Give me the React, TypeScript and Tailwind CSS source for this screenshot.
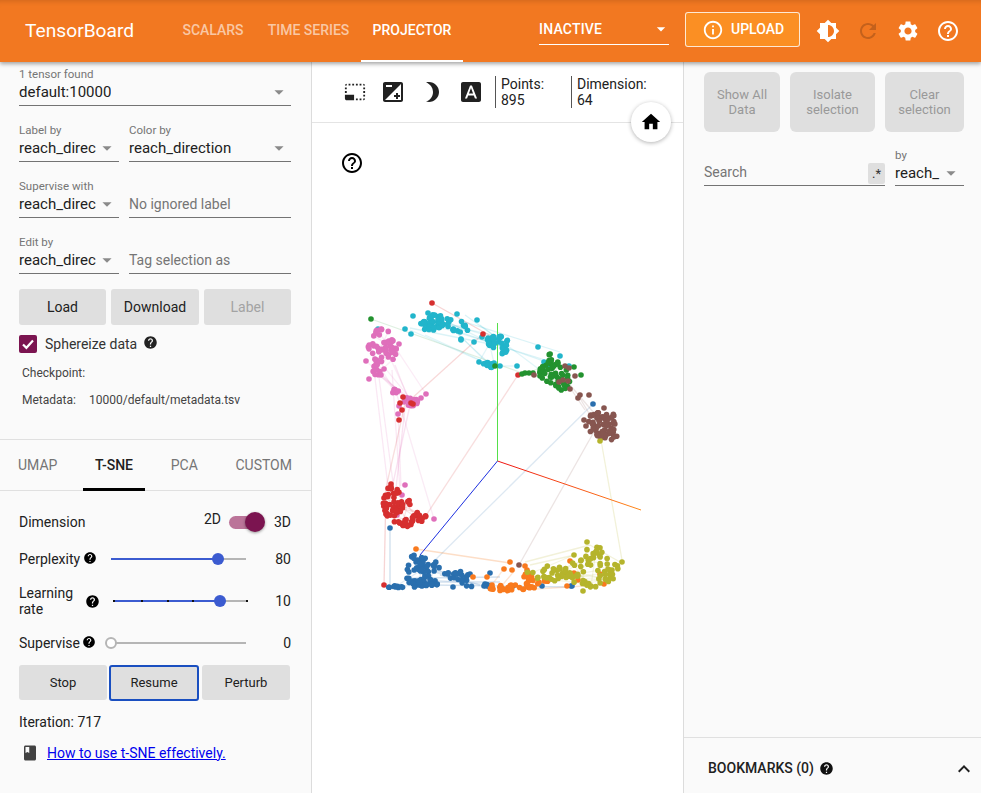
import React from "react";

const P = {
  brightness: "M20 15.31L23.31 12 20 8.69V4h-4.69L12 .69 8.69 4H4v4.69L.69 12 4 15.31V20h4.69L12 23.31 15.31 20H20v-4.69zM12 18V6c3.31 0 6 2.69 6 6s-2.69 6-6 6z",
  refresh: "M17.65 6.35C16.2 4.9 14.21 4 12 4c-4.42 0-7.99 3.58-7.99 8s3.57 8 7.99 8c3.73 0 6.84-2.55 7.73-6h-2.08c-.82 2.33-3.04 4-5.65 4-3.31 0-6-2.69-6-6s2.69-6 6-6c1.66 0 3.14.69 4.22 1.78L13 11h7V4l-2.35 2.35z",
  settings: "M19.14 12.94c.04-.3.06-.61.06-.94 0-.32-.02-.64-.07-.94l2.03-1.58c.18-.14.23-.41.12-.61l-1.92-3.32c-.12-.22-.37-.29-.59-.22l-2.39.96c-.5-.38-1.03-.7-1.62-.94l-.36-2.54c-.04-.24-.24-.41-.48-.41h-3.84c-.24 0-.43.17-.47.41l-.36 2.54c-.59.24-1.13.57-1.62.94l-2.39-.96c-.22-.08-.47 0-.59.22L2.74 8.87c-.12.21-.08.47.12.61l2.03 1.58c-.05.3-.09.63-.09.94s.02.64.07.94l-2.03 1.58c-.18.14-.23.41-.12.61l1.92 3.32c.12.22.37.29.59.22l2.39-.96c.5.38 1.03.7 1.62.94l.36 2.54c.05.24.24.41.48.41h3.84c.24 0 .44-.17.47-.41l.36-2.54c.59-.24 1.13-.56 1.62-.94l2.39.96c.22.08.47 0 .59-.22l1.92-3.32c.12-.22.07-.47-.12-.61l-2.01-1.58zM12 15.6c-1.98 0-3.6-1.62-3.6-3.6s1.62-3.6 3.6-3.6 3.6 1.62 3.6 3.6-1.62 3.6-3.6 3.6z",
  helpOutline: "M11 18h2v-2h-2v2zm1-16C6.48 2 2 6.48 2 12s4.48 10 10 10 10-4.48 10-10S17.52 2 12 2zm0 18c-4.41 0-8-3.59-8-8s3.59-8 8-8 8 3.59 8 8-3.59 8-8 8zm0-14c-2.21 0-4 1.79-4 4h2c0-1.1.9-2 2-2s2 .9 2 2c0 2-3 1.75-3 5h2c0-2.25 3-2.5 3-5 0-2.21-1.79-4-4-4z",
  help: "M12 2C6.48 2 2 6.48 2 12s4.48 10 10 10 10-4.48 10-10S17.52 2 12 2zm1 17h-2v-2h2v2zm2.07-7.75l-.9.92C13.45 12.9 13 13.5 13 15h-2v-.5c0-1.1.45-2.1 1.17-2.83l1.24-1.26c.37-.36.59-.86.59-1.41 0-1.1-.9-2-2-2s-2 .9-2 2H8c0-2.21 1.79-4 4-4s4 1.79 4 4c0 .88-.36 1.68-.93 2.25z",
  info: "M11 7h2v2h-2zm0 4h2v6h-2zm1-9C6.48 2 2 6.48 2 12s4.48 10 10 10 10-4.48 10-10S17.52 2 12 2zm0 18c-4.41 0-8-3.59-8-8s3.59-8 8-8 8 3.59 8 8-3.59 8-8 8z",
  home: "M10 20v-6h4v6h5v-8h3L12 3 2 12h3v8z",
  select: "M23 15h-2v2h2v-2zm0-4h-2v2h2v-2zm0 8h-2v2c1 0 2-1 2-2zM15 3h-2v2h2V3zm8 4h-2v2h2V7zm-2-4v2h2c0-1-1-2-2-2zM3 21h8v-6H1v4c0 1.1.9 2 2 2zM3 7H1v2h2V7zm12 12h-2v2h2v-2zm4-16h-2v2h2V3zm0 16h-2v2h2v-2zM3 3C2 3 1 4 1 5h2V3zm0 8H1v2h2v-2zm8-8H9v2h2V3zM7 3H5v2h2V3z",
  exposure: "M15 17v2h2v-2h2v-2h-2v-2h-2v2h-2v2h2zm5-15H4c-1.1 0-2 .9-2 2v16c0 1.1.9 2 2 2h16c1.1 0 2-.9 2-2V4c0-1.1-.9-2-2-2zM5 5h6v2H5V5zm15 15H4L20 4v16z",
  moon: "M9 2c-1.05 0-2.05.16-3 .46 4.06 1.27 7 5.06 7 9.54 0 4.48-2.94 8.27-7 9.54.95.3 1.95.46 3 .46 5.52 0 10-4.48 10-10S14.52 2 9 2z",
  font: "M9.93 13.5h4.14L12 7.98zM20 2H4c-1.1 0-2 .9-2 2v16c0 1.1.9 2 2 2h16c1.1 0 2-.9 2-2V4c0-1.1-.9-2-2-2zm-4.05 16.5l-1.14-3H9.17l-1.12 3H5.96l5.11-13h1.86l5.11 13h-2.09z",
  book: "M18 2H6c-1.1 0-2 .9-2 2v16c0 1.1.9 2 2 2h12c1.1 0 2-.9 2-2V4c0-1.1-.9-2-2-2zM6 4h5v8l-2.5-1.5L6 12V4z",
  up: "M7.41 15.41L12 10.83l4.59 4.58L18 14l-6-6-6 6z",
  caret: "M7 10l5 5 5-5z",
};

function Icon({ d, size = 24, className = "" }: { d: string; size?: number; className?: string }) {
  return (
    <svg width={size} height={size} viewBox="0 0 24 24" fill="currentColor" className={"shrink-0 " + className}>
      <path d={d} />
    </svg>
  );
}

function SelectBox({ label, value, className = "" }: { label: string; value: string; className?: string }) {
  return (
    <div className={className}>
      <div className="h-[14px] text-[11.5px] leading-[14px] text-[#757575]">{label}</div>
      <div className="h-[25px] flex items-center justify-between border-b border-[#737373] pr-[1px] pb-[2px]">
        <span className="text-[15px] text-[#212121] whitespace-nowrap overflow-hidden">{value}</span>
        <Icon d={P.caret} size={22} className="text-[#8a8a8a]" />
      </div>
    </div>
  );
}

function InputBox({ text, className = "" }: { text: string; className?: string }) {
  return (
    <div className={className}>
      <div className="h-[14px]" />
      <div className="h-[25px] flex items-center border-b border-[#737373] pb-[2px] text-[14px] text-[#757575] whitespace-nowrap">{text}</div>
    </div>
  );
}

function Btn({ children, className = "" }: { children: React.ReactNode; className?: string }) {
  return <div className={"flex items-center justify-center rounded-[3px] bg-[#dfdfdf] " + className}>{children}</div>;
}

function Slider({ pct, ticks, open, className = "" }: { pct: number; ticks?: number[]; open?: boolean; className?: string }) {
  return (
    <div className={"relative h-[2px] bg-[#b5b5b5] " + className}>
      {!open && <div className="absolute left-0 top-0 h-[2px] bg-[#3b5bd0]" style={{ width: pct + "%" }} />}
      {ticks?.map((t) => (
        <div key={t} className="absolute top-0 w-[2px] h-[2px] bg-[#111]" style={{ left: t + "%" }} />
      ))}
      {open ? (
        <div className="absolute left-[-6px] top-[-5px] w-[12px] h-[12px] rounded-full border-2 border-[#b5b5b5] bg-white" />
      ) : (
        <div className="absolute top-[-5px] ml-[-6px] w-[12px] h-[12px] rounded-full bg-[#3b5bd0]" style={{ left: pct + "%" }} />
      )}
    </div>
  );
}

// ---------- scatter drawing ----------
function rng(seed: number) {
  return () => {
    seed |= 0;
    seed = (seed + 0x6d2b79f5) | 0;
    let t = Math.imul(seed ^ (seed >>> 15), 1 | seed);
    t = (t + Math.imul(t ^ (t >>> 7), 61 | t)) ^ t;
    return ((t ^ (t >>> 14)) >>> 0) / 4294967296;
  };
}
type Pt = [number, number];
const C = {
  teal: "#22b5cb",
  pink: "#df6fbb",
  red: "#d62f2f",
  blue: "#2a6fae",
  orange: "#f97a1e",
  olive: "#b5b42c",
  green: "#23922f",
  brown: "#875650",
};
const r = rng(717);
function blob(cx: number, cy: number, rx: number, ry: number, n: number): Pt[] {
  const out: Pt[] = [];
  for (let i = 0; i < n; i++) {
    const a = r() * Math.PI * 2;
    const d = Math.sqrt(r());
    out.push([cx + Math.cos(a) * d * rx, cy + Math.sin(a) * d * ry]);
  }
  return out;
}
const clusters: { c: string; pts: Pt[]; edges?: number }[] = [
  { c: C.teal, edges: 24, pts: [
    ...blob(431, 325, 12, 7, 30), ...blob(447, 323, 9, 6, 12), ...blob(460, 327, 9, 6, 10), ...blob(436, 317, 7, 3, 7),
    ...blob(497, 342, 11, 7, 28), ...blob(489, 365, 8, 3, 12), ...blob(504, 352, 4, 3, 4),
    [413, 316], [428, 313], [457, 314], [461, 339], [477, 320], [494, 363], [500, 366], [482, 337], [378, 329], [405, 329], [411, 334], [461, 340], [479, 362], [474, 342],
    [544, 362], [560, 356], [569, 366], [538, 347], [548, 367], [517, 366],
  ] },
  { c: C.pink, edges: 22, pts: [
    ...blob(388, 350, 11, 11, 30), ...blob(378, 347, 11, 13, 12), ...blob(376, 366, 10, 9, 12), ...blob(381, 332, 8, 3, 8),
    ...blob(411, 401, 7, 5, 18), ...blob(396, 391, 4, 4, 7),
    [366, 361], [369, 379], [381, 375], [399, 344], [405, 399], [426, 394], [421, 398], [398, 414], [399, 406], [384, 369],
    [434, 519], [405, 485], [402, 495], [397, 515],
  ] },
  { c: C.red, edges: 12, pts: [
    ...blob(393, 503, 10, 17, 40), ...blob(404, 523, 12, 4, 18), ...blob(418, 517, 8, 5, 14), ...blob(406, 503, 5, 7, 6),
    [391, 484], [391, 487], [384, 498], [386, 509], [432, 303], [483, 334], [400, 403], [402, 410], [399, 420], [411, 403], [413, 404], [384, 585], [518, 375], [403, 397],
  ] },
  { c: C.blue, edges: 14, pts: [
    ...blob(422, 572, 18, 16, 56), ...blob(424, 585, 14, 4, 12), ...blob(413, 557, 3, 2, 3),
    ...blob(454, 577, 16, 7, 18), ...blob(395, 587, 8, 1.5, 10), ...blob(477, 586, 14, 3, 6),
    [490, 573], [485, 584], [513, 586], [542, 586], [571, 586], [390, 528], [593, 404],
    [470, 574], [484, 586], [453, 587], [572, 586],
  ] },
  { c: C.orange, edges: 0, pts: [
    ...blob(513, 588, 24, 3, 30), ...blob(530, 581, 11, 7, 12), ...blob(545, 579, 5, 3, 5), ...blob(528, 575, 4, 3, 4),
    [416, 549], [510, 562], [504, 569], [512, 570], [487, 577], [473, 577], [570, 561], [574, 573], [578, 580], [600, 574], [604, 584], [567, 586], [492, 585], [527, 570], [525, 566],
  ] },
  { c: C.olive, edges: 24, pts: [
    ...blob(592, 571, 27, 16, 50), ...blob(552, 573, 25, 8, 32), ...blob(594, 552, 8, 8, 10),
    [587, 542], [574, 555], [622, 562], [608, 569], [612, 570], [583, 591], [600, 441], [601, 438], [602, 436], [591, 586],
  ] },
  { c: C.green, edges: 10, pts: [
    ...blob(553, 373, 16, 13, 38), ...blob(561, 382, 10, 8, 12), ...blob(550, 358, 4, 6, 6),
    [581, 375], [522, 374], [525, 373], [529, 373], [533, 373], [371, 319], [495, 366], [540, 376], [574, 367],
  ] },
  { c: C.brown, edges: 8, pts: [
    ...blob(603, 424, 16, 14, 52), ...blob(610, 435, 7, 6, 8),
    [569, 368], [565, 366], [563, 380], [568, 381], [559, 382], [575, 376], [570, 389], [580, 395], [578, 398], [589, 395], [604, 408], [584, 420], [586, 426], [519, 565], [534, 375],
  ] },
];

const extraEdges: [number, number, number, number, string, number][] = [
  [432, 303, 498, 340, C.red, 0.2],
  [371, 319, 430, 340, C.green, 0.15],
  [430, 340, 525, 374, C.green, 0.14],
  [410, 400, 483, 334, C.red, 0.18],
  [384, 585, 386, 490, C.red, 0.2],
  [390, 588, 390, 528, C.blue, 0.22],
  [420, 575, 593, 404, C.blue, 0.16],
  [519, 565, 595, 430, C.brown, 0.16],
  [601, 440, 622, 560, C.olive, 0.18],
  [416, 549, 510, 563, C.orange, 0.25],
  [425, 517, 518, 375, C.red, 0.16],
  [434, 519, 397, 395, C.pink, 0.14],
  [378, 370, 394, 490, C.pink, 0.16],
  [375, 378, 388, 487, C.pink, 0.16],
  [392, 370, 400, 490, C.pink, 0.16],
  [405, 408, 396, 488, C.pink, 0.2],
  [410, 405, 392, 488, C.pink, 0.2],
  [405, 404, 386, 488, C.red, 0.16],
  [398, 412, 401, 486, C.pink, 0.16],
  [395, 365, 408, 398, C.pink, 0.16],
  [380, 375, 400, 395, C.pink, 0.16],
  [440, 325, 555, 365, C.teal, 0.16],
  [450, 330, 545, 360, C.teal, 0.16],
  [465, 322, 560, 352, C.teal, 0.16],
  [480, 325, 540, 370, C.teal, 0.14],
  [465, 315, 500, 340, C.teal, 0.16],
  [410, 330, 490, 365, C.teal, 0.14],
  [425, 335, 480, 360, C.teal, 0.14],
  [410, 328, 495, 345, C.teal, 0.16],
  [530, 373, 560, 385, C.green, 0.16],
  [570, 385, 600, 420, C.brown, 0.16],
  [578, 395, 590, 415, C.brown, 0.16],
  [565, 380, 585, 410, C.brown, 0.16],
  [420, 578, 500, 577, C.blue, 0.2],
  [420, 582, 500, 582, C.blue, 0.2],
  [430, 585, 570, 587, C.blue, 0.2],
  [440, 575, 480, 585, C.blue, 0.2],
  [515, 570, 500, 588, C.orange, 0.2],
  [503, 570, 488, 590, C.orange, 0.16],
  [525, 562, 590, 545, C.olive, 0.18],
  [530, 565, 575, 555, C.olive, 0.18],
  [590, 545, 620, 562, C.olive, 0.18],
  [520, 590, 600, 585, C.orange, 0.2],
];

function Scatter() {
  return (
    <svg width={371} height={670} viewBox="312 123 371 670" className="absolute left-0 top-0 pointer-events-none">
      <defs>
        <linearGradient id="xaxis" gradientUnits="userSpaceOnUse" x1="497" y1="461" x2="641" y2="510">
          <stop offset="0" stopColor="#ee1111" />
          <stop offset="1" stopColor="#ff8a1a" />
        </linearGradient>
      </defs>
      {extraEdges.map((e, i) => (
        <line key={i} x1={e[0]} y1={e[1]} x2={e[2]} y2={e[3]} stroke={e[4]} strokeOpacity={e[5]} strokeWidth={1.3} />
      ))}
      {clusters.map((cl, ci) =>
        Array.from({ length: cl.edges ?? 0 }).map((_, i) => {
          const a = cl.pts[(i * 7 + 3) % cl.pts.length];
          const b = cl.pts[(i * 13 + 11) % cl.pts.length];
          if (Math.hypot(a[0] - b[0], a[1] - b[1]) > 60) return null;
          return <line key={ci + "-" + i} x1={a[0]} y1={a[1]} x2={b[0]} y2={b[1]} stroke={cl.c} strokeOpacity={0.13} strokeWidth={1.3} />;
        })
      )}
      <line x1={497.5} y1={461} x2={497.5} y2={323} stroke="#55e04a" />
      <line x1={497.5} y1={461} x2={641} y2={510} stroke="url(#xaxis)" />
      <line x1={497.5} y1={461} x2={420} y2={555} stroke="#1c2fe0" />
      {clusters.map((cl, ci) =>
        cl.pts.map((p, i) => <circle key={ci + "_" + i} cx={p[0]} cy={p[1]} r={2.8} fill={cl.c} />)
      )}
    </svg>
  );
}

export default function App() {
  return (
    <div className="w-[981px] h-[793px] flex flex-col overflow-hidden bg-white text-[#212121] font-['Roboto',sans-serif]">
      {/* top bar */}
      <header className="relative z-10 h-[62px] shrink-0 flex items-center bg-[#f27821] text-white shadow-[0_2px_4px_rgba(0,0,0,0.35),inset_0_6px_6px_-6px_rgba(0,0,0,0.2)]">
        <div className="ml-[25px] w-[145px] text-[19.2px]">TensorBoard</div>
        <nav className="flex h-full text-[14px] font-medium">
          <div className="w-[86px] flex items-center justify-center text-white/60 pb-[2px]">SCALARS</div>
          <div className="w-[105px] flex items-center justify-center text-white/60 pb-[2px]">TIME SERIES</div>
          <div className="w-[102px] flex items-center justify-center border-b-2 border-white">PROJECTOR</div>
        </nav>
        <div className="ml-[76px] w-[130px] h-[33px] flex items-center justify-between border-b border-white text-[14px] font-medium tracking-[0.2px] mt-[-5px] pt-[2px]">
          <span>INACTIVE</span>
          <Icon d={P.caret} size={20} className="mr-[-2px]" />
        </div>
        <div className="ml-[16px] w-[115px] h-[35px] flex items-center rounded-[3px] border border-white/80 bg-[#fb8f23] pl-[16px] gap-[7px] text-[14px] font-medium mt-[-3px]">
          <Icon d={P.info} size={22} />
          <span>UPLOAD</span>
        </div>
        <div className="ml-[16px] flex items-center gap-[16px]">
          <Icon d={P.brightness} />
          <Icon d={P.refresh} className="text-[#c4611c]" />
          <Icon d={P.settings} />
          <Icon d={P.helpOutline} />
        </div>
      </header>

      <main className="flex flex-1 min-h-0">
        {/* left panel */}
        <aside className="w-[312px] shrink-0 bg-[#fafafa] border-r border-[#dcdcdc] flex flex-col">
          <div className="px-[19px] pr-[20px] pt-[5px]">
            <SelectBox label="1 tensor found" value="default:10000" />
            <div className="flex gap-[10px] mt-[17px]">
              <SelectBox label="Label by" value="reach_direc" className="w-[100px]" />
              <SelectBox label="Color by" value="reach_direction" className="flex-1" />
            </div>
            <div className="flex gap-[10px] mt-[17px]">
              <SelectBox label="Supervise with" value="reach_direc" className="w-[100px]" />
              <InputBox text="No ignored label" className="flex-1" />
            </div>
            <div className="flex gap-[10px] mt-[17px]">
              <SelectBox label="Edit by" value="reach_direc" className="w-[100px]" />
              <InputBox text="Tag selection as" className="flex-1" />
            </div>
            <div className="flex gap-[5px] mt-[15px] text-[14px]">
              <Btn className="w-[87px] h-[36px]">Load</Btn>
              <Btn className="w-[88px] h-[36px]">Download</Btn>
              <Btn className="w-[87px] h-[36px] text-[#a3a3a3]">Label</Btn>
            </div>
            <div className="flex items-center mt-[10px] h-[18px]">
              <div className="w-[18px] h-[18px] rounded-[2px] bg-[#7b1450] flex items-center justify-center">
                <svg width={14} height={14} viewBox="0 0 14 14" fill="none" stroke="#fff" strokeWidth={2.2}>
                  <path d="M2 7.5l3.4 3.3L12 3.6" />
                </svg>
              </div>
              <span className="ml-[8px] text-[14px] text-[#333]">Sphereize data</span>
              <Icon d={P.help} size={15} className="ml-[6px] mt-[-3px] text-[#222]" />
            </div>
            <div className="mt-[12px] ml-[3px] text-[12px] leading-[16px] text-[#444]">Checkpoint:</div>
            <div className="mt-[11px] ml-[3px] text-[12px] leading-[16px] text-[#444] flex">
              <span className="w-[67px]">Metadata:</span>
              <span>10000/default/metadata.tsv</span>
            </div>
          </div>

          <div className="mt-[31px] border-t border-[#e0e0e0] h-[52px] border-b flex items-stretch text-[14px] text-[#757575] pl-[18px] pr-[19px] justify-between">
            <div className="flex items-center">UMAP</div>
            <div className="relative flex items-center font-medium text-[#212121]">
              T-SNE
              <div className="absolute left-[-12px] right-[-12px] bottom-[-1px] h-[3px] bg-black" />
            </div>
            <div className="flex items-center">PCA</div>
            <div className="flex items-center">CUSTOM</div>
          </div>

          <div className="px-[19px] pr-[20px] text-[14px] text-[#212121]">
            <div className="h-[30px] mt-[16px] flex items-center justify-between">
              <span>Dimension</span>
              <div className="flex items-center">
                <span className="mt-[-5px]">2D</span>
                <div className="relative ml-[8px] w-[33px] h-[13px] rounded-full bg-[#bb7499]">
                  <div className="absolute right-[-3px] top-[-4px] w-[20px] h-[20px] rounded-full bg-[#7b1450] shadow-[0_1px_3px_rgba(0,0,0,0.4)]" />
                </div>
                <span className="ml-[12px]">3D</span>
              </div>
            </div>
            <div className="h-[24px] mt-[10px] flex items-center">
              <span>Perplexity</span>
              <Icon d={P.help} size={14} className="ml-[3px] mt-[-3px] text-black" />
              <Slider pct={79} className="ml-[14px] w-[135px]" />
              <span className="ml-auto">80</span>
            </div>
            <div className="h-[32px] mt-[14px] flex items-center">
              <span className="w-[66px] leading-[16px]">Learning rate</span>
              <Icon d={P.help} size={15} className="ml-[0px] text-black" />
              <Slider pct={80} ticks={[0, 21, 40, 59, 99]} className="ml-[13px] w-[134px]" />
              <span className="ml-auto">10</span>
            </div>
            <div className="h-[24px] mt-[14px] flex items-center">
              <span>Supervise</span>
              <Icon d={P.help} size={14} className="ml-[2px] mt-[-3px] text-black" />
              <Slider pct={0} open className="ml-[15px] w-[135px]" />
              <span className="ml-auto">0</span>
            </div>
            <div className="flex mt-[10px] text-[13px]">
              <Btn className="w-[88px] h-[35px]">Stop</Btn>
              <Btn className="ml-[2px] w-[90px] h-[36px] border-2 border-[#1a4fc0]">Resume</Btn>
              <Btn className="ml-[3px] w-[88px] h-[35px]">Perturb</Btn>
            </div>
            <div className="mt-[13px] leading-[16px]">Iteration: 717</div>
            <div className="mt-[15px] h-[16px] flex items-center">
              <Icon d={P.book} size={18} className="ml-[2px] text-[#424242]" />
              <a href="#" className="ml-[8px] text-[#0000ee] underline whitespace-nowrap">How to use t-SNE effectively.</a>
            </div>
          </div>
        </aside>

        {/* center */}
        <section className="w-[371px] shrink-0 flex flex-col bg-white">
          <div className="relative h-[61px] shrink-0 border-b border-[#e4e4e4] flex items-center pl-[32px] text-[14px] leading-[16px] text-[#212121]">
            <div className="flex items-center gap-[15px] mt-[-1px]">
              <Icon d={P.select} size={22} />
              <Icon d={P.exposure} />
              <Icon d={P.moon} />
              <Icon d={P.font} />
            </div>
            <div className="ml-[12px] h-[32px] border-l border-[#555] pl-[5px] w-[76px] mt-[-1px]">Points:<br />895</div>
            <div className="h-[32px] border-l border-[#555] pl-[5px] mt-[-1px]">Dimension:<br />64</div>
            <div className="absolute z-[5] right-[12px] top-[40px] w-[40px] h-[40px] rounded-full bg-white shadow-[0_1px_4px_rgba(0,0,0,0.3)] flex items-center justify-center">
              <Icon d={P.home} size={22} className="text-black" />
            </div>
          </div>
          <div className="relative flex-1">
            <Scatter />
            <Icon d={P.helpOutline} className="absolute left-[28px] top-[28px] text-black" />
          </div>
        </section>

        {/* right */}
        <aside className="w-[298px] shrink-0 bg-[#fafafa] border-l border-[#dcdcdc] flex flex-col">
          <div className="pl-[20px] pr-[17px] pt-[10px] flex-1">
            <div className="flex gap-[10px] text-[13px] leading-[15px] text-[#999] text-center">
              <div className="w-[76px] h-[60px] rounded-[6px] bg-[#dfdfdf] flex items-center justify-center">Show All<br />Data</div>
              <div className="w-[85px] h-[60px] rounded-[6px] bg-[#dfdfdf] flex items-center justify-center">Isolate<br />selection</div>
              <div className="w-[79px] h-[60px] rounded-[6px] bg-[#dfdfdf] flex items-center justify-center">Clear<br />selection</div>
            </div>
            <div className="flex gap-[10px] mt-[16px]">
              <div className="w-[181px] h-[38px] border-b border-[#737373] flex items-end justify-between">
                <span className="text-[14px] text-[#757575] leading-[26px]">Search</span>
                <span className="w-[17px] h-[21px] mb-[1px] rounded-[2px] bg-[#dfdfdf] text-[13px] leading-[21px] text-center text-[#333]">.*</span>
              </div>
              <div className="w-[69px] relative h-[38px]">
                <div className="h-[14px] text-[11.5px] leading-[14px] text-[#757575]">by</div>
                <div className="h-[24px] border-b border-[#737373] flex items-center justify-between pb-[1px]">
                  <span className="text-[15px] text-[#212121]">reach_</span>
                  <Icon d={P.caret} size={22} className="text-[#8a8a8a] mr-[2px]" />
                </div>
              </div>
            </div>
          </div>
          <div className="h-[56px] border-t border-[#e0e0e0] flex items-center pl-[24px] pr-[5px] pt-[6px] text-[14px] font-medium text-[#212121]">
            <span>BOOKMARKS (0)</span>
            <Icon d={P.help} size={15} className="ml-[5px] mt-[-1px] text-[#111]" />
            <Icon d={P.up} size={24} className="ml-auto" />
          </div>
        </aside>
      </main>
    </div>
  );
}
